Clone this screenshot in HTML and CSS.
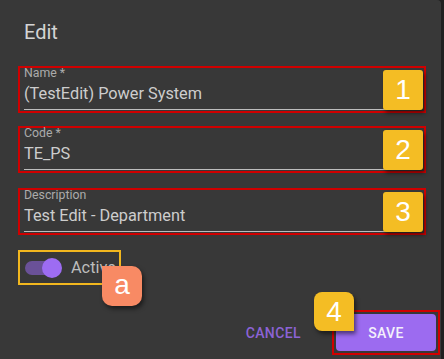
FILE: index.html
```html
<!DOCTYPE html>
<html lang="en">
<head>
<meta charset="utf-8">
<title>Edit</title>
<link rel="stylesheet" href="styles.css">
</head>
<body>
<div class="dialog">
  <h2 class="title">Edit</h2>
  <div class="fields">
    <div class="mark mark-red field-mark">
      <div class="field">
        <span class="label">Name *</span>
        <span class="value">(TestEdit) Power System</span>
      </div>
      <span class="badge badge-num">1</span>
    </div>
    <div class="mark mark-red field-mark gap-1">
      <div class="field">
        <span class="label">Code *</span>
        <span class="value">TE_PS</span>
      </div>
      <span class="badge badge-num">2</span>
    </div>
    <div class="mark mark-red field-mark gap-2">
      <div class="field">
        <span class="label">Description</span>
        <span class="value">Test Edit - Department</span>
      </div>
      <span class="badge badge-num">3</span>
    </div>
  </div>
  <div class="active-row">
    <div class="mark mark-yellow switch-mark">
      <span class="switch"><span class="track"></span><span class="knob"></span></span>
      <span class="switch-label">Active</span>
    </div>
    <span class="badge badge-a">a</span>
  </div>
  <div class="actions">
    <button class="btn-cancel">CANCEL</button>
    <div class="mark mark-red save-mark">
      <button class="btn-save">SAVE</button>
      <span class="badge badge-4">4</span>
    </div>
  </div>
</div>
</body>
</html>
```
FILE: styles.css
```css
* { box-sizing: border-box; }
html, body { margin: 0; padding: 0; }
body {
  background: #202020;
  width: 444px;
  height: 359px;
  overflow: hidden;
  font-family: Roboto, "Liberation Sans", sans-serif;
}
.dialog {
  width: 441px;
  height: 359px;
  background: #383838;
  border-radius: 0 4px 0 0;
  padding: 20px 0 0 18px;
}
.title {
  margin: 0 0 22px 6px;
  font-size: 20px;
  line-height: 24px;
  font-weight: 400;
  color: #d4d4d4;
}
.fields { display: flex; flex-direction: column; }
.mark { position: relative; border-style: solid; border-width: 2px; }
.mark-red { border-color: #d00000; }
.mark-yellow { border-color: #f2b71e; }
.field-mark {
  width: 408px;
  padding: 0 4px 1px 4px;
}
.gap-1 { margin-top: 13px; }
.gap-2 { margin-top: 15px; }
.field {
  display: flex;
  flex-direction: column;
  border-bottom: 1px solid #bdbdbd;
  padding-bottom: 6px;
}
.label {
  font-size: 12.3px;
  line-height: 10px;
  color: #ababab;
}
.value {
  margin-top: 6px;
  font-size: 16.3px;
  line-height: 19px;
  color: #cdcdcd;
}
.badge {
  position: absolute;
  width: 40px;
  height: 40px;
  display: flex;
  align-items: center;
  justify-content: center;
  font-family: "Liberation Sans", Arial, sans-serif;
  font-size: 28px;
  color: #ffffff;
  box-shadow: 2px 3px 4px rgba(0, 0, 0, 0.5);
}
.badge-num {
  right: 1px;
  top: 2px;
  background: #f4bd24;
  border-radius: 3px;
}
.active-row {
  position: relative;
  margin-top: 15px;
  display: flex;
}
.switch-mark {
  height: 35px;
  display: flex;
  align-items: center;
  padding: 0 3px 0 5px;
}
.switch {
  position: relative;
  width: 37px;
  height: 20px;
  display: flex;
  align-items: center;
}
.track {
  width: 34px;
  height: 14px;
  border-radius: 7px;
  background: #6a5198;
}
.knob {
  position: absolute;
  left: 17px;
  top: 0;
  width: 20px;
  height: 20px;
  border-radius: 50%;
  background: #9d6cf2;
}
.switch-label {
  margin-left: 9px;
  font-size: 16.3px;
  color: #bdbdbd;
}
.badge-a {
  left: 84px;
  top: 16px;
  background: #f88a64;
  border-radius: 0 10px 10px 10px;
  padding-bottom: 2px;
}
.actions {
  margin-top: 25px;
  display: flex;
  align-items: center;
  justify-content: flex-end;
}
.btn-cancel {
  background: none;
  border: 0;
  padding: 0;
  margin-right: 31px;
  font-family: Roboto, sans-serif;
  font-size: 14px;
  font-weight: 500;
  letter-spacing: 0.4px;
  color: #8c63d6;
}
.save-mark {
  padding: 2px;
  margin-right: 1px;
}
.btn-save {
  display: block;
  width: 100px;
  height: 37px;
  border: 0;
  border-radius: 4px;
  background: #9c6bf0;
  color: #f3f0fb;
  font-family: Roboto, sans-serif;
  font-size: 14px;
  font-weight: 500;
  letter-spacing: 0.4px;
}
.badge-4 {
  left: -20px;
  top: -20px;
  height: 39px;
  background: #f4bd24;
  border-radius: 8px 8px 0 8px;
}
```
